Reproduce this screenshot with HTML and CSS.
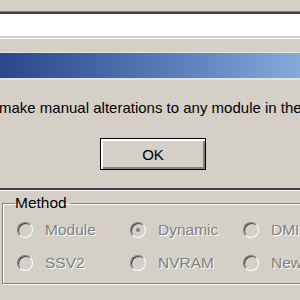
FILE: index.html
```html
<!DOCTYPE html>
<html lang="en">
<head>
    <meta charset="UTF-8">
    <title>Module Settings</title>
    <link rel="stylesheet" href="styles.css">
</head>
<body>
    <div class="window">
        <div class="top-gap"></div>
        <div class="field"></div>
        <div class="band"></div>
        <div class="titlebar"></div>

        <p class="message">make manual alterations to any module in the</p>

        <div class="actions">
            <button class="btn btn-default" type="button">OK</button>
        </div>

        <div class="separator"></div>

        <fieldset class="group">
            <legend>Method</legend>
            <div class="radio-grid">
                <label class="radio"><span class="dot"></span>Module</label>
                <label class="radio"><span class="dot checked"></span>Dynamic</label>
                <label class="radio"><span class="dot"></span>DMI</label>
                <label class="radio"><span class="dot"></span>SSV2</label>
                <label class="radio"><span class="dot"></span>NVRAM</label>
                <label class="radio"><span class="dot"></span>New</label>
            </div>
        </fieldset>
    </div>
</body>
</html>
```

FILE: styles.css
```css
* {
    margin: 0;
    padding: 0;
    box-sizing: border-box;
}

body {
    font-family: Tahoma, 'Liberation Sans', Arial, sans-serif;
    font-size: 15px;
    background: #d4d0c8;
    color: #000;
    overflow: hidden;
}

.window {
    width: 300px;
    height: 300px;
}

.top-gap {
    height: 11px;
}

.field {
    height: 27px;
    background: #fff;
    border-top: 1px solid #808080;
    box-shadow: inset 0 2px 0 #404040, inset 0 -2px 0 #d4d0c8;
}

/* strip of dialog between the edit box and the caption */
.band {
    height: 14px;
    border-top: 1px solid #fff;
}

.titlebar {
    height: 28px;
    border-top: 1px solid #e8e6e2;
    border-bottom: 2px solid #e4e2dc;
    background: linear-gradient(to right, #29478a 0%, #4867a6 35%, #6888c4 70%, #88aad9 100%);
}

.message {
    margin: 20px 0 0 -1px;
    font-size: 15px;
    line-height: 16px;
    white-space: nowrap;
}

.actions {
    display: flex;
    padding: 22px 0 0 100px;
}

.btn {
    width: 106px;
    height: 32px;
    font-family: inherit;
    font-size: 15px;
    background: #d4d0c8;
    color: #000;
    border: 1px solid #000;
    box-shadow: inset 2px 2px 0 #fff, inset -2px -2px 0 #808080;
}

.separator {
    margin-top: 18px;
    height: 3px;
    border-top: 2px solid #404040;
    border-bottom: 1px solid #fff;
}

.group {
    margin: 5px 0 0 2px;
    width: 320px;
    height: 88px;
    border: 1px solid #808080;
    box-shadow: 1px 1px 0 #fff, inset 1px 1px 0 #fff;
    padding: 0 0 0 14px;
}

.group legend {
    margin-left: -2px;
    padding: 0 3px 0 0;
    line-height: 14px;
    font-size: 15.5px;
    color: #000;
}

.radio-grid {
    display: grid;
    grid-template-columns: 113px 113px 80px;
    row-gap: 15px;
    padding-top: 11px;
}

.radio {
    display: flex;
    align-items: center;
    gap: 12px;
    height: 18px;
    font-size: 15.5px;
    color: #808080;
    text-shadow: 1px 1px 0 #fff;
}

.dot {
    position: relative;
    width: 16px;
    height: 16px;
    border-radius: 50%;
    border: 1px solid;
    border-color: #808080 #fff #fff #808080;
    background: #d4d0c8;
    box-shadow: inset 1px 1px 0 #404040, inset -1px -1px 0 #d4d0c8;
}

.dot.checked::after {
    content: '';
    position: absolute;
    left: 5px;
    top: 5px;
    width: 4px;
    height: 4px;
    border-radius: 50%;
    background: #808080;
}
```
